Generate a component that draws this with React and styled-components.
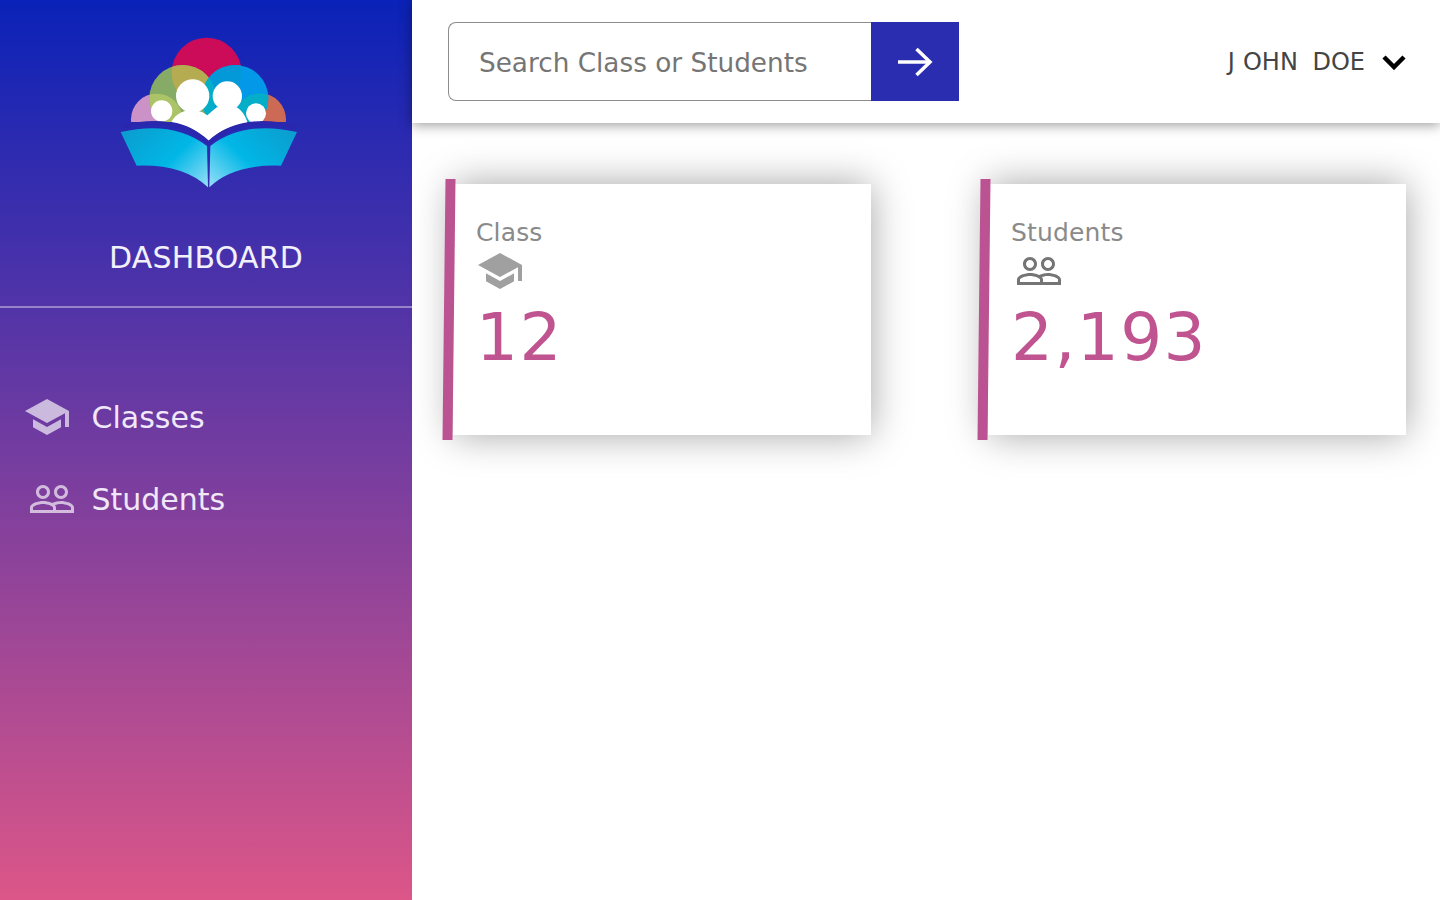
import React from "react";
import styled, { createGlobalStyle } from "styled-components";

const CAP_PATH =
  "M5 13.18v4L12 21l7-3.82v-4L12 17l-7-3.82zM12 3L1 9l11 6 9-4.91V17h2V9L12 3z";
const PEOPLE_PATH =
  "M16.5 13c-1.2 0-3.07.34-4.5 1-1.43-.67-3.3-1-4.5-1C5.33 13 1 14.08 1 16.25V19h22v-2.75c0-2.17-4.33-3.25-6.5-3.25zm-4 4.5h-10v-1.25c0-.54 2.56-1.75 5-1.75s5 1.21 5 1.75v1.25zm9 0H14v-1.25c0-.46-.2-.86-.52-1.22.88-.3 1.96-.53 3.02-.53 2.44 0 5 1.21 5 1.75v1.25zM7.5 12c1.93 0 3.5-1.57 3.5-3.5S9.43 5 7.5 5 4 6.57 4 8.5 5.57 12 7.5 12zm0-5.5c1.1 0 2 .9 2 2s-.9 2-2 2-2-.9-2-2 .9-2 2-2zm9 5.5c1.93 0 3.5-1.57 3.5-3.5S18.43 5 16.5 5 13 6.57 13 8.5s1.57 3.5 3.5 3.5zm0-5.5c1.1 0 2 .9 2 2s-.9 2-2 2-2-.9-2-2 .9-2 2-2z";

const GlobalStyle = createGlobalStyle`
  html, body {
    margin: 0;
    padding: 0;
    height: 100%;
    background: #fff;
    font-family: "DejaVu Sans", sans-serif;
  }
  #root {
    height: 100%;
  }
`;

const Logo = () => (
  <LogoSvg viewBox="0 0 720 540">
    <defs>
      <clipPath id="aboveBook">
        <rect x="0" y="0" width="720" height="306" />
      </clipPath>
      <clipPath id="inRed">
        <circle cx="350" cy="158" r="105" />
      </clipPath>
      <clipPath id="inGreen">
        <circle cx="278" cy="235" r="100" />
      </clipPath>
      <clipPath id="inBlue">
        <circle cx="435" cy="235" r="100" />
      </clipPath>
      <linearGradient id="pageLeft" x1="0" y1="0.2" x2="1" y2="0.9">
        <stop offset="0" stopColor="#0a9fd0" />
        <stop offset="0.55" stopColor="#00b7e6" />
        <stop offset="1" stopColor="#8adcf6" />
      </linearGradient>
      <linearGradient id="pageRight" x1="1" y1="0.2" x2="0" y2="0.9">
        <stop offset="0" stopColor="#0a9fd0" />
        <stop offset="0.55" stopColor="#00b7e6" />
        <stop offset="1" stopColor="#8adcf6" />
      </linearGradient>
    </defs>
    <g clipPath="url(#aboveBook)">
      <circle cx="350" cy="158" r="105" fill="#cc0c58" />
      <circle cx="200" cy="298" r="77" fill="#cb92c8" />
      <circle cx="510" cy="298" r="78" fill="#cc6a55" />
      <circle cx="278" cy="235" r="100" fill="#86ab66" />
      <circle cx="435" cy="235" r="100" fill="#0398e8" />
      <g clipPath="url(#inRed)">
        <circle cx="278" cy="235" r="100" fill="#b5ab50" />
        <circle cx="435" cy="235" r="100" fill="#0398d8" />
      </g>
      <g clipPath="url(#inGreen)">
        <circle cx="200" cy="298" r="77" fill="#acc468" />
        <circle cx="435" cy="235" r="100" fill="#04aec8" />
      </g>
      <g clipPath="url(#inBlue)">
        <circle cx="510" cy="298" r="78" fill="#04aec8" />
      </g>
      <circle cx="215" cy="273" r="32" fill="#fff" />
      <circle cx="498" cy="280" r="30" fill="#fff" />
    </g>
    <circle cx="308" cy="228" r="50" fill="#fff" />
    <circle cx="412" cy="228" r="44" fill="#fff" />
    <path
      d="M244 306 C256 282 282 272 304 268 L336 276 L352 286 L380 262 L440 262 C456 272 466 288 472 306 L470 312 Q400 318 356 364 Q310 316 244 306 Z"
      fill="#fff"
    />
    <path
      d="M100 320 Q260 282 356 368 Q450 282 612 320"
      fill="none"
      stroke="#2a27ad"
      strokeWidth="10"
    />
    <path d="M92 336 Q250 300 351 378 L354 502 Q280 432 140 437 Z" fill="url(#pageLeft)" />
    <path d="M621 336 Q460 300 361 378 L358 502 Q430 432 573 437 Z" fill="url(#pageRight)" />
  </LogoSvg>
);

const NAV_ITEMS = [
  { label: "Classes", path: CAP_PATH, offset: 23 },
  { label: "Students", path: PEOPLE_PATH, offset: 28 }
];

const STATS = [
  { label: "Class", value: "12", path: CAP_PATH, color: "#a0a0a0", offset: 0 },
  { label: "Students", value: "2,193", path: PEOPLE_PATH, color: "#757575", offset: 4 }
];

const App = () => {
  return (
    <>
      <GlobalStyle />
      <Page>
        <Sidebar>
          <Brand>
            <Logo />
            <BrandTitle>DASHBOARD</BrandTitle>
          </Brand>
          <Nav>
            {NAV_ITEMS.map(item => (
              <NavItem key={item.label}>
                <NavIcon $offset={item.offset} viewBox="0 0 24 24">
                  <path d={item.path} />
                </NavIcon>
                <NavLabel>{item.label}</NavLabel>
              </NavItem>
            ))}
          </Nav>
        </Sidebar>
        <Main>
          <Header>
            <SearchForm>
              <SearchInput placeholder="Search Class or Students" />
              <SearchButton type="button" aria-label="Search">
                <svg width="36" height="32" viewBox="0 0 36 32" fill="none" stroke="#fff" strokeWidth="3.500">
                  <path d="M1 16h32" />
                  <path d="M19.500 3l13.500 13-13.500 13" />
                </svg>
              </SearchButton>
            </SearchForm>
            <UserMenu>
              <UserName>
                <Initial>J</Initial>OHN DOE
              </UserName>
              <svg width="24" height="16" viewBox="0 0 24 16" fill="none" stroke="#000" strokeWidth="4.500">
                <path d="M2 3l10 10L22 3" />
              </svg>
            </UserMenu>
          </Header>
          <Cards>
            {STATS.map(stat => (
              <Card key={stat.label}>
                <CardLabel>{stat.label}</CardLabel>
                <CardIcon $offset={stat.offset} $color={stat.color} viewBox="0 0 24 24">
                  <path d={stat.path} />
                </CardIcon>
                <CardValue>{stat.value}</CardValue>
              </Card>
            ))}
          </Cards>
        </Main>
      </Page>
    </>
  );
};

const Page = styled.div`
  display: flex;
  height: 900px;
  overflow: hidden;
`;

const Sidebar = styled.aside`
  width: 412px;
  flex-shrink: 0;
  background: linear-gradient(180deg, #0a22b8 0%, #dc5688 100%);
`;

const Brand = styled.div`
  height: 306px;
  border-bottom: 2px solid rgba(255, 255, 255, 0.4);
  display: flex;
  flex-direction: column;
  align-items: center;
`;

const LogoSvg = styled.svg`
  width: 240px;
  height: 180px;
  margin-top: 20px;
  margin-left: 8px;
`;

const BrandTitle = styled.div`
  margin-top: 38px;
  font-size: 30px;
  line-height: 40px;
  letter-spacing: 0.2px;
  color: #f2f0fb;
`;

const Nav = styled.nav`
  padding-top: 68px;
`;

const NavItem = styled.div`
  height: 82px;
  display: flex;
  align-items: center;
`;

const NavIcon = styled.svg`
  width: 48px;
  height: 48px;
  margin-left: ${props => props.$offset}px;
  margin-right: ${props => 43.5 - props.$offset}px;
  fill: rgba(255, 255, 255, 0.65);
`;

const NavLabel = styled.span`
  font-size: 30px;
  color: #f0e8f8;
`;

const Main = styled.main`
  flex: 1;
  min-width: 0;
`;

const Header = styled.header`
  height: 123px;
  box-sizing: border-box;
  padding: 22px 34px 22px 36px;
  display: flex;
  justify-content: space-between;
  align-items: flex-start;
  background: #fff;
  box-shadow: 0 2px 12px rgba(0, 0, 0, 0.4);
`;

const SearchForm = styled.form`
  display: flex;
  width: 511px;
  height: 79px;
  margin: 0;
`;

const SearchInput = styled.input`
  flex: 1;
  min-width: 0;
  box-sizing: border-box;
  padding: 2px 0 0 30px;
  border: 1px solid #8d8d8d;
  border-right: none;
  border-radius: 8px 0 0 8px;
  outline: none;
  font-family: "DejaVu Sans", sans-serif;
  font-size: 26.300px;
  &::placeholder {
    color: #757575;
  }
`;

const SearchButton = styled.button`
  width: 88px;
  flex-shrink: 0;
  border: none;
  padding: 0;
  background: #2a2db0;
  display: flex;
  align-items: center;
  justify-content: center;
`;

const UserMenu = styled.div`
  display: flex;
  align-items: center;
  gap: 17px;
  height: 79px;
`;

const UserName = styled.span`
  padding-top: 1px;
  font-size: 24px;
  word-spacing: 7px;
  color: #444;
`;

const Initial = styled.span`
  letter-spacing: 8px;
`;

const Cards = styled.section`
  display: flex;
  justify-content: space-between;
  padding: 61px 34px 0 41px;
`;

const Card = styled.article`
  position: relative;
  width: 418px;
  height: 251px;
  box-sizing: border-box;
  padding: 34px 0 0 23px;
  background: #fff;
  box-shadow: 0 0 36px rgba(0, 0, 0, 0.36);
  &::before {
    content: "";
    position: absolute;
    left: -9px;
    top: -5px;
    width: 10px;
    height: 261px;
    background: #bb5292;
    transform: skewX(-0.66deg);
  }
`;

const CardLabel = styled.div`
  font-size: 25px;
  line-height: 29px;
  letter-spacing: 0.15px;
  color: #8a8a8a;
`;

const CardIcon = styled.svg`
  display: block;
  width: 48px;
  height: 48px;
  margin-left: ${props => props.$offset}px;
  fill: ${props => props.$color};
`;

const CardValue = styled.div`
  margin-top: 3px;
  font-size: 66px;
  line-height: 80px;
  letter-spacing: 1.400px;
  color: #c05490;
`;

export default App;
